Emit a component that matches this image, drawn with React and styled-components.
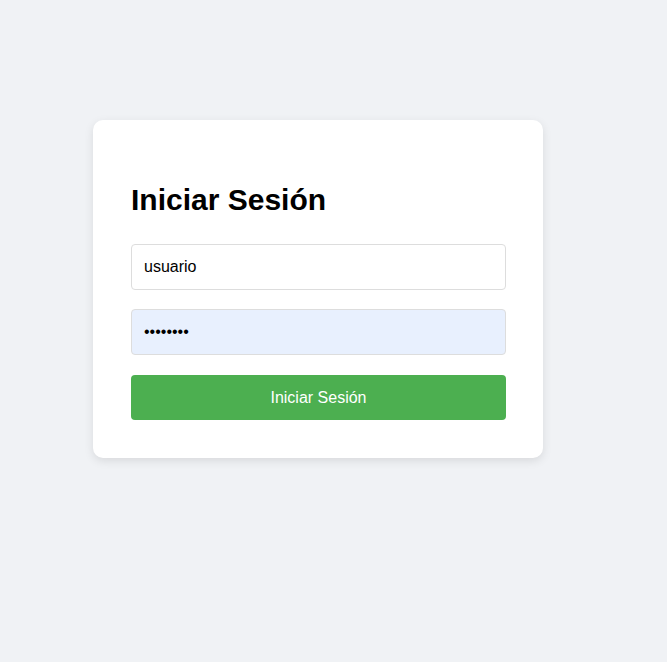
import React from "react";
import styled, { createGlobalStyle } from "styled-components";

const Global = createGlobalStyle`
  html, body { margin: 0; padding: 0; }
  body {
    background: #f0f2f5;
    font-family: "Liberation Sans", Arial, sans-serif;
    min-height: 662px;
  }
`;

const Page = styled.div`
  padding: 120px 0 0 93px;
`;

const Card = styled.div`
  width: 450px;
  box-sizing: border-box;
  background: #ffffff;
  border-radius: 10px;
  box-shadow: 0 3px 10px rgba(0, 0, 0, 0.1);
  padding: 62px 37px 38px 38px;
`;

const Title = styled.h1`
  margin: 0 0 26px;
  font-size: 30px;
  line-height: 36px;
  font-weight: bold;
  color: #000;
`;

const Form = styled.form`
  display: flex;
  flex-direction: column;
  gap: 19px;
`;

const Input = styled.input`
  box-sizing: border-box;
  width: 375px;
  height: 46px;
  padding: 0 12px;
  border: 1px solid #dddddd;
  border-radius: 4px;
  font-family: "Liberation Sans", Arial, sans-serif;
  font-size: 16px;
  color: #000;
  background: ${(p) => (p.$filled ? "#e8f0fe" : "#ffffff")};
  outline: none;
`;

const Button = styled.button`
  box-sizing: border-box;
  width: 375px;
  height: 45px;
  margin-top: 1px;
  border: none;
  border-radius: 4px;
  background: #4caf50;
  color: #ffffff;
  font-family: "Liberation Sans", Arial, sans-serif;
  font-size: 16px;
  cursor: pointer;
`;

export default function App() {
  return (
    <>
      <Global />
      <Page>
        <Card>
          <Title>Iniciar Sesión</Title>
          <Form onSubmit={(e) => e.preventDefault()}>
            <Input type="text" defaultValue="usuario" />
            <Input type="password" defaultValue="12345678" $filled />
            <Button type="submit">Iniciar Sesión</Button>
          </Form>
        </Card>
      </Page>
    </>
  );
}
